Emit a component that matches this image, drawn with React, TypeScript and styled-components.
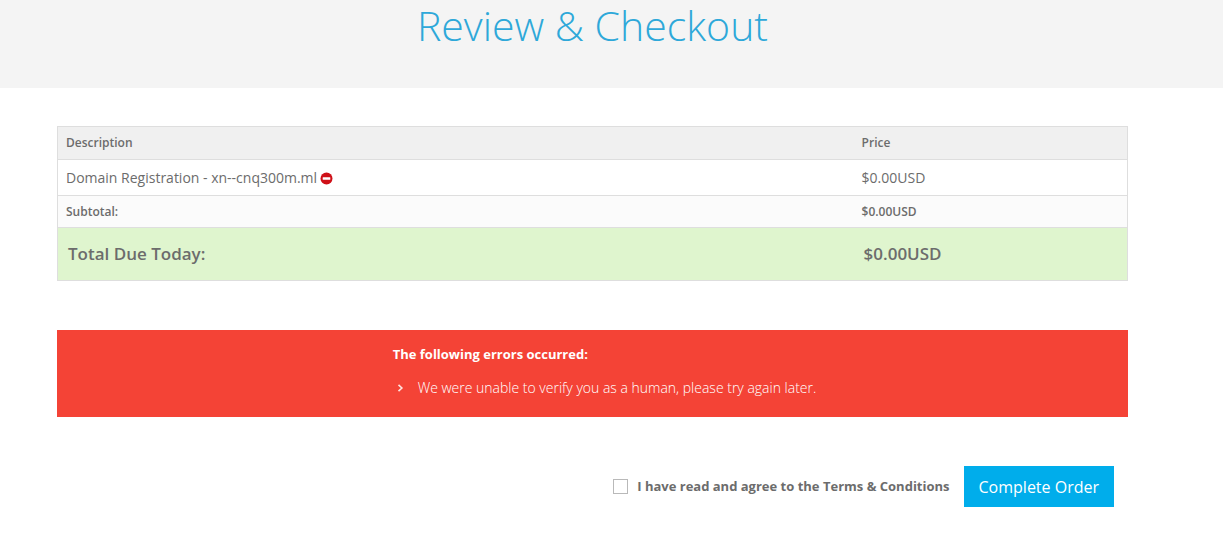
import React from "react";
import styled, { createGlobalStyle } from "styled-components";

const GlobalStyle = createGlobalStyle`
  * { box-sizing: border-box; }
  body {
    margin: 0;
    background: #fff;
    color: #6c6c6c;
    font-family: "Open Sans", "Noto Sans", sans-serif;
    font-size: 14px;
    line-height: 20px;
  }
`;

const Banner = styled.header`
  background: #f4f4f4;
  padding: 0 95px 32px 57px;
`;

const Title = styled.h1`
  margin: 0;
  color: #2ea8d9;
  font-size: 41px;
  font-weight: 300;
  line-height: 50px;
  padding-bottom: 6px;
  text-align: center;
`;

const Content = styled.main`
  display: flex;
  flex-direction: column;
  gap: 49px;
  padding: 38px 95px 32px 57px;
`;

const SummaryTable = styled.table`
  width: 100%;
  table-layout: fixed;
  border-collapse: collapse;
  border: 1px solid #dedede;
`;

const DescriptionColumn = styled.col`
  width: 74.4%;
`;

type RowKind = "head" | "item" | "subtotal" | "total";

const rowStyles: Record<RowKind, string> = {
  head: "height: 33px; background: #f0f0f0; font-size: 12px; font-weight: 600;",
  item: "height: 36px; background: #fff;",
  subtotal: "height: 32px; background: #fbfbfb; font-size: 12px; font-weight: 600;",
  total: "height: 53px; background: #dff5ce; font-size: 17px; font-weight: 600;",
};

const Row = styled.tr<{ $kind: RowKind }>`
  ${({ $kind }) => rowStyles[$kind]}
  border-bottom: 1px solid #dedede;

  th, td {
    padding: 0 ${({ $kind }) => ($kind === "total" ? 10 : 8)}px;
    text-align: left;
    font-weight: inherit;
  }
`;

const RemoveButton = styled.button`
  display: inline-flex;
  margin: 0 0 0 3px;
  padding: 0;
  border: 0;
  background: none;
  vertical-align: -2px;
  cursor: pointer;
`;

const ErrorBox = styled.section`
  display: flex;
  justify-content: center;
  padding: 14px 16px 19px 40px;
  background: #f44336;
  color: #fff;
`;

const ErrorTitle = styled.p`
  margin: 0 0 14px;
  font-size: 13px;
  font-weight: 700;
`;

const ErrorList = styled.ul`
  margin: 0;
  padding: 0;
  list-style: none;
`;

const ErrorItem = styled.li`
  display: flex;
  align-items: center;
  gap: 14px;
  padding-left: 4px;
  font-weight: 300;
`;

const OrderForm = styled.form`
  display: flex;
  justify-content: flex-end;
  align-items: center;
  gap: 14px;
  padding-right: 14px;
`;

const Agreement = styled.div`
  display: flex;
  align-items: center;
  gap: 9px;
  padding-bottom: 2px;
  font-size: 13px;
  font-weight: 700;
`;

const Checkbox = styled.input`
  appearance: none;
  width: 15px;
  height: 15px;
  margin: 2px 0 0;
  border: 1px solid #b9b9b9;
  background: #fff;

  &:checked {
    background: #00adeb;
  }
`;

const TermsLink = styled.a`
  color: inherit;
  text-decoration: none;
`;

const SubmitButton = styled.button`
  height: 41px;
  padding: 0 15px;
  border: 0;
  background: #00adeb;
  color: #fff;
  font-family: inherit;
  font-size: 16px;
  cursor: pointer;
`;

const RemoveIcon = () => (
  <svg width="13" height="13" viewBox="0 0 13 13" aria-hidden="true">
    <circle cx="6.5" cy="6.5" r="6" fill="#cf1018" />
    <rect x="2.7" y="5.2" width="7.6" height="2.5" rx="0.5" fill="#fff" />
  </svg>
);

const Chevron = () => (
  <svg width="7" height="8" viewBox="0 0 7 8" aria-hidden="true">
    <path d="M1.5 0.8 L4.9 4 L1.5 7.2" fill="none" stroke="#ffe3df" strokeWidth="1.6" />
  </svg>
);

export default function App() {
  return (
    <>
      <GlobalStyle />
      <Banner>
        <Title>Review &amp; Checkout</Title>
      </Banner>
      <Content>
        <SummaryTable>
          <colgroup>
            <DescriptionColumn />
            <col />
          </colgroup>
          <thead>
            <Row $kind="head">
              <th scope="col">Description</th>
              <th scope="col">Price</th>
            </Row>
          </thead>
          <tbody>
            <Row $kind="item">
              <td>
                Domain Registration - xn--cnq300m.ml
                <RemoveButton type="button" aria-label="Remove item">
                  <RemoveIcon />
                </RemoveButton>
              </td>
              <td>$0.00USD</td>
            </Row>
            <Row $kind="subtotal">
              <th scope="row">Subtotal:</th>
              <td>$0.00USD</td>
            </Row>
            <Row $kind="total">
              <th scope="row">Total Due Today:</th>
              <td>$0.00USD</td>
            </Row>
          </tbody>
        </SummaryTable>
        <ErrorBox role="alert">
          <div>
            <ErrorTitle>The following errors occurred:</ErrorTitle>
            <ErrorList>
              <ErrorItem>
                <Chevron />
                We were unable to verify you as a human, please try again later.
              </ErrorItem>
            </ErrorList>
          </div>
        </ErrorBox>
        <OrderForm onSubmit={(event) => event.preventDefault()}>
          <Agreement>
            <Checkbox type="checkbox" id="terms" />
            <label htmlFor="terms">
              I have read and agree to the <TermsLink href="#terms">Terms &amp; Conditions</TermsLink>
            </label>
          </Agreement>
          <SubmitButton type="submit">Complete Order</SubmitButton>
        </OrderForm>
      </Content>
    </>
  );
}
